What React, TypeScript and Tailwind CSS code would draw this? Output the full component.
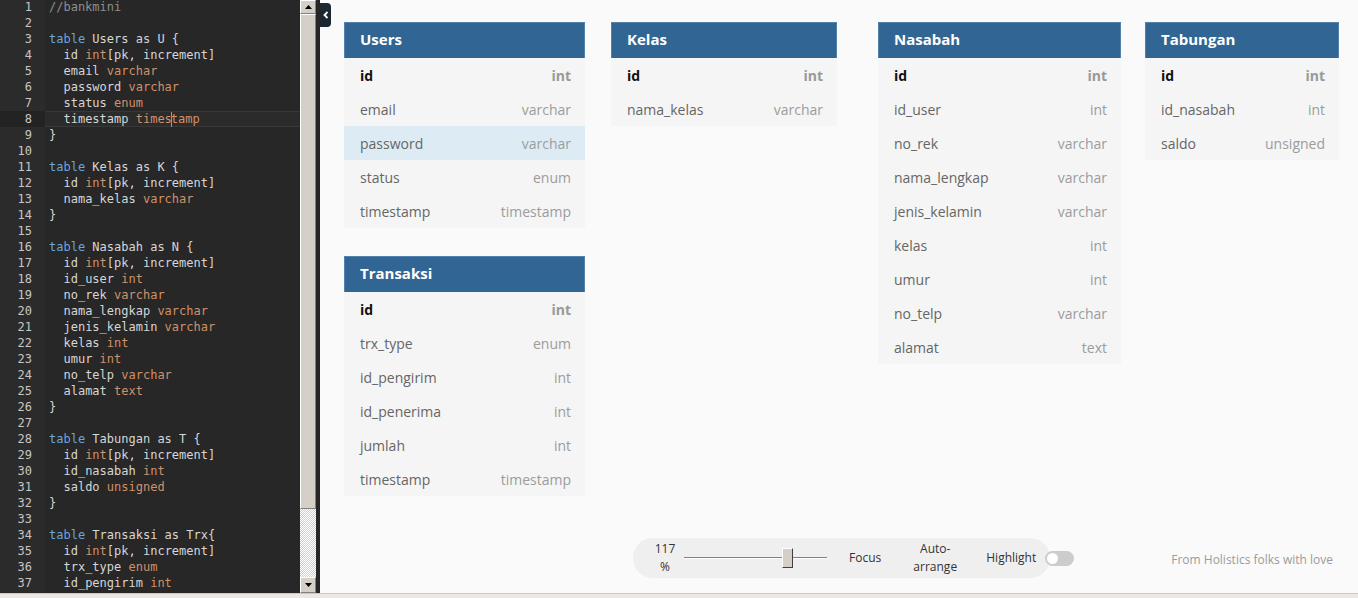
import React from 'react';

type Field = { name: string; type: string; pk?: boolean; hl?: boolean };
type Table = { name: string; x: number; y: number; w: number; fields: Field[] };

const tables: Table[] = [
  {
    name: 'Users', x: 24, y: 22, w: 241,
    fields: [
      { name: 'id', type: 'int', pk: true },
      { name: 'email', type: 'varchar' },
      { name: 'password', type: 'varchar', hl: true },
      { name: 'status', type: 'enum' },
      { name: 'timestamp', type: 'timestamp' },
    ],
  },
  {
    name: 'Transaksi', x: 24, y: 256, w: 241,
    fields: [
      { name: 'id', type: 'int', pk: true },
      { name: 'trx_type', type: 'enum' },
      { name: 'id_pengirim', type: 'int' },
      { name: 'id_penerima', type: 'int' },
      { name: 'jumlah', type: 'int' },
      { name: 'timestamp', type: 'timestamp' },
    ],
  },
  {
    name: 'Kelas', x: 291, y: 22, w: 226,
    fields: [
      { name: 'id', type: 'int', pk: true },
      { name: 'nama_kelas', type: 'varchar' },
    ],
  },
  {
    name: 'Nasabah', x: 558, y: 22, w: 243,
    fields: [
      { name: 'id', type: 'int', pk: true },
      { name: 'id_user', type: 'int' },
      { name: 'no_rek', type: 'varchar' },
      { name: 'nama_lengkap', type: 'varchar' },
      { name: 'jenis_kelamin', type: 'varchar' },
      { name: 'kelas', type: 'int' },
      { name: 'umur', type: 'int' },
      { name: 'no_telp', type: 'varchar' },
      { name: 'alamat', type: 'text' },
    ],
  },
  {
    name: 'Tabungan', x: 825, y: 22, w: 194,
    fields: [
      { name: 'id', type: 'int', pk: true },
      { name: 'id_nasabah', type: 'int' },
      { name: 'saldo', type: 'unsigned' },
    ],
  },
];

type Line =
  | { kind: 'blank' }
  | { kind: 'comment'; text: string }
  | { kind: 'table'; text: string }
  | { kind: 'close' }
  | { kind: 'field'; name: string; type: string; rest?: string };

const src: Line[] = [
  { kind: 'comment', text: '//bankmini' },
  { kind: 'blank' },
  { kind: 'table', text: 'Users as U {' },
  { kind: 'field', name: 'id', type: 'int', rest: '[pk, increment]' },
  { kind: 'field', name: 'email', type: 'varchar' },
  { kind: 'field', name: 'password', type: 'varchar' },
  { kind: 'field', name: 'status', type: 'enum' },
  { kind: 'field', name: 'timestamp', type: 'timestamp' },
  { kind: 'close' },
  { kind: 'blank' },
  { kind: 'table', text: 'Kelas as K {' },
  { kind: 'field', name: 'id', type: 'int', rest: '[pk, increment]' },
  { kind: 'field', name: 'nama_kelas', type: 'varchar' },
  { kind: 'close' },
  { kind: 'blank' },
  { kind: 'table', text: 'Nasabah as N {' },
  { kind: 'field', name: 'id', type: 'int', rest: '[pk, increment]' },
  { kind: 'field', name: 'id_user', type: 'int' },
  { kind: 'field', name: 'no_rek', type: 'varchar' },
  { kind: 'field', name: 'nama_lengkap', type: 'varchar' },
  { kind: 'field', name: 'jenis_kelamin', type: 'varchar' },
  { kind: 'field', name: 'kelas', type: 'int' },
  { kind: 'field', name: 'umur', type: 'int' },
  { kind: 'field', name: 'no_telp', type: 'varchar' },
  { kind: 'field', name: 'alamat', type: 'text' },
  { kind: 'close' },
  { kind: 'blank' },
  { kind: 'table', text: 'Tabungan as T {' },
  { kind: 'field', name: 'id', type: 'int', rest: '[pk, increment]' },
  { kind: 'field', name: 'id_nasabah', type: 'int' },
  { kind: 'field', name: 'saldo', type: 'unsigned' },
  { kind: 'close' },
  { kind: 'blank' },
  { kind: 'table', text: 'Transaksi as Trx{' },
  { kind: 'field', name: 'id', type: 'int', rest: '[pk, increment]' },
  { kind: 'field', name: 'trx_type', type: 'enum' },
  { kind: 'field', name: 'id_pengirim', type: 'int' },
];

const CodeLine: React.FC<{ line: Line; n: number }> = ({ line, n }) => {
  const active = n === 8;
  let body: React.ReactNode = '\u00a0';
  if (line.kind === 'comment') body = <span className="text-[#8e8e8e]">{line.text}</span>;
  if (line.kind === 'table')
    body = (
      <>
        <span className="text-[#6aa6dc]">table</span> {line.text}
      </>
    );
  if (line.kind === 'close') body = '}';
  if (line.kind === 'field') {
    if (active) {
      body = (
        <>
          {'  '}{line.name} <span className="text-[#d0916a]">times</span>
          <span className="inline-block w-px h-[15px] bg-[#9a9a9a] align-middle -mx-px" />
          <span className="text-[#d0916a]">tamp</span>
        </>
      );
    } else {
      body = (
        <>
          {'  '}{line.name} <span className="text-[#d0916a]">{line.type}</span>
          {line.rest}
        </>
      );
    }
  }
  return (
    <div
      className={`h-4 leading-4 pl-1 whitespace-pre ${
        active ? 'bg-[#2b2b2b] shadow-[inset_0_1px_0_#383838,inset_0_-1px_0_#383838]' : ''
      }`}
    >
      {body}
    </div>
  );
};

const Editor: React.FC = () => (
  <div className="w-[320px] h-full flex bg-[#262626] overflow-hidden">
    <div className="w-[45px] h-full bg-[#2b2b2b] overflow-hidden">
      <div className="-mt-px">
        {src.map((_, i) => (
          <div
            key={i}
            className={`h-4 leading-4 text-right pr-[13px] text-[#c6c6c6] ${i === 7 ? 'bg-[#232323]' : ''}`}
          >
            {i + 1}
          </div>
        ))}
      </div>
    </div>
    <div className="flex-1 h-full overflow-hidden bg-[#272727] text-[#d6d6d6]">
      <div className="-mt-px">
        {src.map((l, i) => (
          <CodeLine key={i} line={l} n={i + 1} />
        ))}
      </div>
    </div>
    <div className="w-[16px] h-full flex flex-col bg-[#d4d0c8]">
      <div className="h-[14px] flex items-center justify-center bg-[#d4d0c8] border-t border-l border-white border-r border-b border-r-[#808080] border-b-[#808080]">
        <svg width="7" height="4" viewBox="0 0 7 4">
          <path d="M3.5 0 L7 4 L0 4 Z" fill="#000" />
        </svg>
      </div>
      <div className="h-[495px] bg-[#d4d0c8] border-t border-l border-white border-r border-b border-r-[#808080] border-b-[#808080]" />
      <div className="flex-1 bg-[repeating-conic-gradient(#ffffff_0_25%,#d4d0c8_0_50%)] bg-[length:2px_2px]" />
      <div className="h-[16px] flex items-center justify-center bg-[#d4d0c8] border-t border-l border-white border-r border-b border-r-[#808080] border-b-[#808080]">
        <svg width="7" height="4" viewBox="0 0 7 4">
          <path d="M0 0 L7 0 L3.5 4 Z" fill="#000" />
        </svg>
      </div>
    </div>
    <div className="w-[4px] h-full bg-[#262626]" />
  </div>
);

const TableCard: React.FC<{ t: Table }> = ({ t }) => (
  <div className="absolute bg-[#f5f5f5]" style={{ left: t.x, top: t.y, width: t.w }}>
    <div className="h-[36px] bg-[#316593] border-t border-x border-[#5281ab] flex items-center pl-[15px] pb-[2px] text-white font-bold text-[15px]">
      {t.name}
    </div>
    {t.fields.map((f) => (
      <div
        key={f.name}
        className={`h-[34px] flex items-center justify-between pl-4 pr-[14px] text-[14px] ${
          f.hl ? 'bg-[#ddecf4]' : ''
        }`}
      >
        <span className={f.pk ? 'font-bold text-[#111]' : 'text-[#666]'}>{f.name}</span>
        <span className={f.pk ? 'font-bold text-[#999]' : 'text-[#9c9c9c]'}>{f.type}</span>
      </div>
    ))}
  </div>
);

const Controls: React.FC = () => (
  <div className="absolute left-[313px] top-[538px] w-[417px] h-[40px] rounded-full bg-[#efefef] flex items-center text-[12px] text-[#333] leading-[18px]">
    <div className="w-[48px] shrink-0 pl-[16px] text-center">
      <div>117</div>
      <div>%</div>
    </div>
    <div className="relative shrink-0 ml-[3px] w-[143px] h-[20px] flex items-center">
      <div className="w-full h-[2px] border-t border-[#808080] border-b border-b-white" />
      <div className="absolute left-[98px] top-0 w-[11px] h-[20px] bg-[#d4d0c8] border-t border-l border-white border-r border-b border-r-[#404040] border-b-[#404040]" />
    </div>
    <div className="ml-[22px] shrink-0">Focus</div>
    <div className="ml-[27px] shrink-0 text-center w-[54px]">
      <div>Auto-</div>
      <div>arrange</div>
    </div>
    <div className="ml-[24px] shrink-0">Highlight</div>
    <div className="ml-[9px] shrink-0 w-[29px] h-[15px] rounded-full bg-[#cccccc] p-[2px]">
      <div className="w-[11px] h-[11px] rounded-full bg-white" />
    </div>
  </div>
);

export default function App() {
  return (
    <div className="w-[1358px] h-[598px] overflow-hidden flex flex-col bg-[#fafafa]">
      <div className="h-[593px] flex">
        <div className="font-['DejaVu_Sans_Mono',monospace] text-[12px]">
          <Editor />
        </div>
        <div className="flex-1 relative bg-[#fafafa] font-['Open_Sans',sans-serif]">
          <div className="absolute left-0 top-[3px] w-[11px] h-[24px] rounded-r-[4px] bg-[#1d2731] flex items-center justify-center">
            <svg width="6" height="8" viewBox="0 0 6 8">
              <path d="M4.5 1 L1.5 4 L4.5 7" stroke="#fff" strokeWidth="1.8" fill="none" />
            </svg>
          </div>
          {tables.map((t) => (
            <TableCard key={t.name} t={t} />
          ))}
          <Controls />
          <div className="absolute right-[25px] top-[551px] text-[12px] text-[#9a9a9a]">
            From Holistics folks with love
          </div>
        </div>
      </div>
      <div className="h-[5px] border-t border-[#cfcac0] bg-[#ebe8e2]" />
    </div>
  );
}
